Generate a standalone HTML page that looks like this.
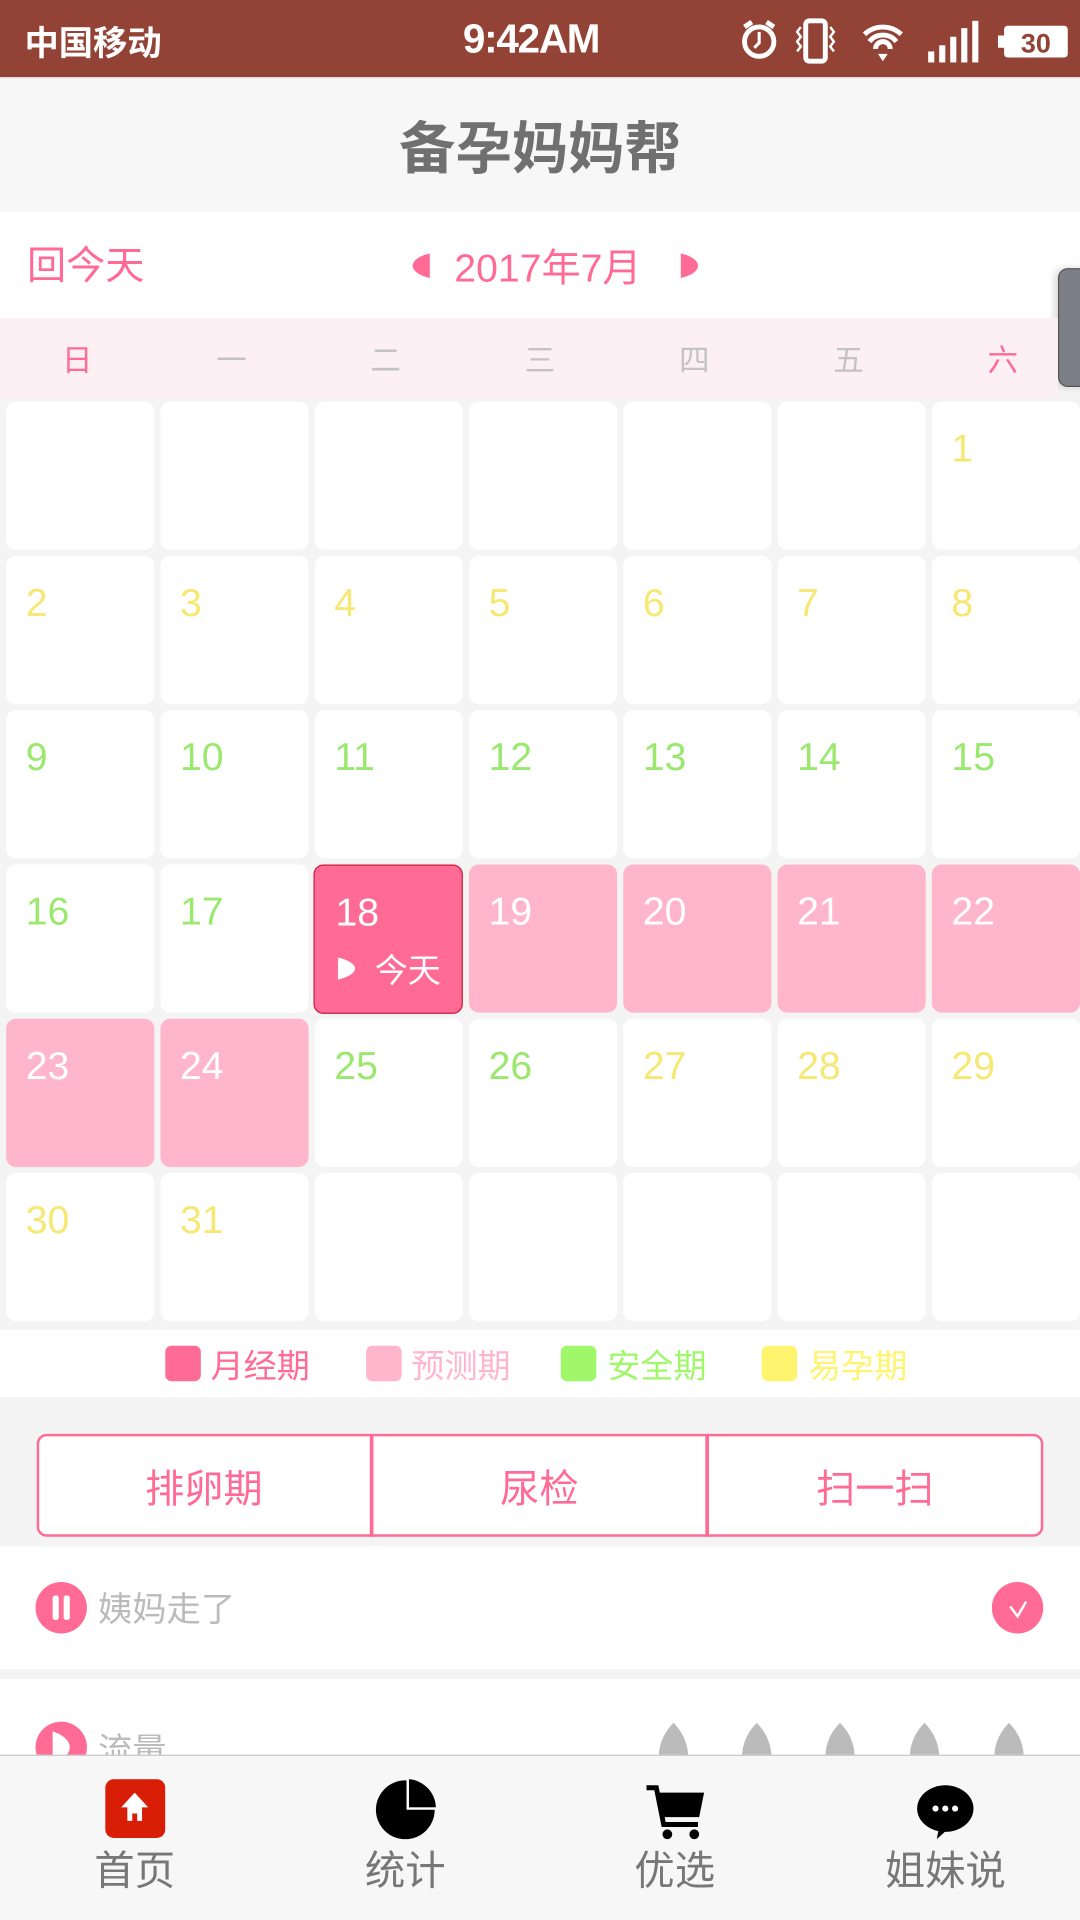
<!DOCTYPE html>
<html><head><meta charset="utf-8">
<style>
*{margin:0;padding:0;box-sizing:border-box}
html,body{width:1080px;height:1920px;overflow:hidden;background:#f5f5f5}
#w{position:absolute;left:0;top:0;width:882px;height:1568px;transform:scale(1.22449);transform-origin:0 0;font-family:"Liberation Sans","Noto Sans CJK SC",sans-serif;background:#f4f4f4}
.a{position:absolute}
.c{position:absolute;width:121px;height:121px;background:#fff;border-radius:8px}
.n{position:absolute;left:16px;top:20px;font-size:32px;line-height:36px}
.y{color:#f7e873}.g{color:#9be86f}.wt{color:#fff}
.wd{position:absolute;top:275px;font-size:25px;color:#c3c3c3;width:60px;text-align:center}
</style></head><body><div id="w">
<div class="a" style="left:0;top:0;width:882px;height:63px;background:#934335;color:#fff;font-weight:bold">
 <div class="a" style="left:20px;top:14px;font-size:28px">中国移动</div>
 <div class="a" style="left:378px;top:13px;font-size:33px;letter-spacing:-1px">9:42AM</div>
 <svg class="a" style="left:600px;top:14px" width="280" height="40" viewBox="0 0 280 40">
  <circle cx="20" cy="20" r="12" fill="none" stroke="#fff" stroke-width="4"/><path d="M20 12v9l-4 4" stroke="#fff" stroke-width="2.5" fill="none"/><path d="M8 8l6-4M32 8l-6-4" stroke="#fff" stroke-width="4"/>
  <rect x="58" y="3" width="16" height="33" rx="3" fill="none" stroke="#fff" stroke-width="4"/><path d="M54 8l-3 4 3 4-3 4 3 4-3 4M78 8l3 4-3 4 3 4-3 4 3 4" stroke="#fff" stroke-width="2" fill="none"/>
  <path d="M106 14a22 22 0 0 1 30 0M110 20a14 14 0 0 1 22 0M115 26a6 6 0 0 1 12 0" stroke="#fff" stroke-width="4" fill="none"/><path d="M117 30h8l-4 6z" fill="#fff"/>
  <rect x="158" y="28" width="5" height="9" fill="#fff"/><rect x="167" y="23" width="5" height="14" fill="#fff"/><rect x="176" y="16" width="5" height="21" fill="#fff"/><rect x="185" y="9" width="5" height="28" fill="#fff"/><rect x="194" y="3" width="5" height="34" fill="#fff"/>
  <rect x="220" y="7" width="52" height="26" rx="3" fill="#fff"/><rect x="215" y="15" width="6" height="10" fill="#fff"/>
  <text x="246" y="29" font-size="22" font-weight="bold" text-anchor="middle" fill="#934335" font-family="Liberation Sans">30</text>
 </svg>
</div>
<div class="a" style="left:0;top:63px;width:882px;height:110px;background:#f7f7f7;border-top:1px solid #ddd"></div>
<div class="a" style="left:0;top:85px;width:882px;text-align:center;font-size:46px;font-weight:bold;color:#707070">备孕妈妈帮</div>
<div class="a" style="left:0;top:173px;width:882px;height:87px;background:#fff"></div>
<div class="a" style="left:22px;top:192px;font-size:32px;color:#ff6b95">回今天</div>
<svg class="a" style="left:334px;top:205px" width="20" height="24"><path d="M17 2C8 4 3 8 3 12s5 8 14 10z" fill="#ff6b95"/></svg>
<div class="a" style="left:371px;top:194px;font-size:32px;color:#ff6b95">2017年7月</div>
<svg class="a" style="left:553px;top:205px" width="20" height="24"><path d="M3 2c9 2 14 6 14 10s-5 8-14 10z" fill="#ff6b95"/></svg>
<div class="a" style="left:864px;top:219px;width:30px;height:97px;background:#7c7e88;border:1px solid #555;border-radius:8px;box-shadow:-3px 0 6px rgba(0,0,0,.15)"></div>
<div class="a" style="left:0;top:260px;width:864px;height:65px;background:#fdf0f4"></div>
<div class="wd" style="left:33px;color:#ff6b95">日</div>
<div class="wd" style="left:159px">一</div>
<div class="wd" style="left:285px">二</div>
<div class="wd" style="left:411px">三</div>
<div class="wd" style="left:537px">四</div>
<div class="wd" style="left:663px">五</div>
<div class="wd" style="left:789px;color:#ff6b95">六</div>

<div class="c" style="left:5px;top:328px"></div><div class="c" style="left:131px;top:328px"></div><div class="c" style="left:257px;top:328px"></div><div class="c" style="left:383px;top:328px"></div><div class="c" style="left:509px;top:328px"></div><div class="c" style="left:635px;top:328px"></div>
<div class="c" style="left:761px;top:328px"><div class="n y">1</div></div>
<div class="c" style="left:5px;top:454px"><div class="n y">2</div></div>
<div class="c" style="left:131px;top:454px"><div class="n y">3</div></div>
<div class="c" style="left:257px;top:454px"><div class="n y">4</div></div>
<div class="c" style="left:383px;top:454px"><div class="n y">5</div></div>
<div class="c" style="left:509px;top:454px"><div class="n y">6</div></div>
<div class="c" style="left:635px;top:454px"><div class="n y">7</div></div>
<div class="c" style="left:761px;top:454px"><div class="n y">8</div></div>
<div class="c" style="left:5px;top:580px"><div class="n g">9</div></div>
<div class="c" style="left:131px;top:580px"><div class="n g">10</div></div>
<div class="c" style="left:257px;top:580px"><div class="n g">11</div></div>
<div class="c" style="left:383px;top:580px"><div class="n g">12</div></div>
<div class="c" style="left:509px;top:580px"><div class="n g">13</div></div>
<div class="c" style="left:635px;top:580px"><div class="n g">14</div></div>
<div class="c" style="left:761px;top:580px"><div class="n g">15</div></div>
<div class="c" style="left:5px;top:706px"><div class="n g">16</div></div>
<div class="c" style="left:131px;top:706px"><div class="n g">17</div></div>
<div class="c" style="left:256px;top:706px;width:122px;height:122px;background:#ff6b95;border:1px solid #d01a3a"><div class="n wt" style="left:17px">18</div>
 <svg class="a" style="left:16px;top:73px" width="20" height="22"><path d="M3 2c9 2 14 6 14 9s-5 7-14 9z" fill="#fff"/></svg>
 <div class="a" style="left:49px;top:64px;font-size:27px;color:#fff">今天</div></div>
<div class="c" style="left:383px;top:706px;background:#ffb6cc"><div class="n wt">19</div></div>
<div class="c" style="left:509px;top:706px;background:#ffb6cc"><div class="n wt">20</div></div>
<div class="c" style="left:635px;top:706px;background:#ffb6cc"><div class="n wt">21</div></div>
<div class="c" style="left:761px;top:706px;background:#ffb6cc"><div class="n wt">22</div></div>
<div class="c" style="left:5px;top:832px;background:#ffb6cc"><div class="n wt">23</div></div>
<div class="c" style="left:131px;top:832px;background:#ffb6cc"><div class="n wt">24</div></div>
<div class="c" style="left:257px;top:832px"><div class="n g">25</div></div>
<div class="c" style="left:383px;top:832px"><div class="n g">26</div></div>
<div class="c" style="left:509px;top:832px"><div class="n y">27</div></div>
<div class="c" style="left:635px;top:832px"><div class="n y">28</div></div>
<div class="c" style="left:761px;top:832px"><div class="n y">29</div></div>
<div class="c" style="left:5px;top:958px"><div class="n y">30</div></div>
<div class="c" style="left:131px;top:958px"><div class="n y">31</div></div>
<div class="c" style="left:257px;top:958px"></div><div class="c" style="left:383px;top:958px"></div><div class="c" style="left:509px;top:958px"></div><div class="c" style="left:635px;top:958px"></div><div class="c" style="left:761px;top:958px"></div>

<div class="a" style="left:0;top:1086px;width:882px;height:55px;background:#fff"></div>
<div class="a" style="left:135px;top:1099px;width:29px;height:29px;border-radius:5px;background:#ff6b95"></div>
<div class="a" style="left:172px;top:1094px;font-size:27px;color:#ff6b95">月经期</div>
<div class="a" style="left:299px;top:1099px;width:29px;height:29px;border-radius:5px;background:#ffb6cc"></div>
<div class="a" style="left:336px;top:1094px;font-size:27px;color:#ffb6cc">预测期</div>
<div class="a" style="left:458px;top:1099px;width:29px;height:29px;border-radius:5px;background:#a0f76a"></div>
<div class="a" style="left:496px;top:1094px;font-size:27px;color:#a0f76a">安全期</div>
<div class="a" style="left:622px;top:1099px;width:29px;height:29px;border-radius:5px;background:#fff46e"></div>
<div class="a" style="left:660px;top:1094px;font-size:27px;color:#fff46e">易孕期</div>

<div class="a" style="left:30px;top:1171px;width:822px;height:84px;border:2px solid #ff6b95;border-radius:8px;background:#fff"></div>
<div class="a" style="left:302px;top:1171px;width:3px;height:84px;background:#ff6b95"></div>
<div class="a" style="left:576px;top:1171px;width:3px;height:84px;background:#ff6b95"></div>
<div class="a" style="left:30px;top:1191px;width:273px;text-align:center;font-size:32px;color:#ff6b95">排卵期</div>
<div class="a" style="left:304px;top:1191px;width:273px;text-align:center;font-size:32px;color:#ff6b95">尿检</div>
<div class="a" style="left:578px;top:1191px;width:273px;text-align:center;font-size:32px;color:#ff6b95">扫一扫</div>

<div class="a" style="left:0;top:1263px;width:882px;height:100px;background:#fff"></div>
<div class="a" style="left:29px;top:1292px;width:42px;height:42px;border-radius:50%;background:#ff6b95"></div>
<div class="a" style="left:43px;top:1303px;width:5px;height:20px;background:#fff;border-radius:2px"></div>
<div class="a" style="left:52px;top:1303px;width:5px;height:20px;background:#fff;border-radius:2px"></div>
<div class="a" style="left:80px;top:1293px;font-size:28px;color:#bbb">姨妈走了</div>
<div class="a" style="left:810px;top:1292px;width:42px;height:42px;border-radius:50%;background:#ff6b95"></div>
<svg class="a" style="left:810px;top:1292px" width="42" height="42"><path d="M15 20l6 8 7-12" stroke="#fff" stroke-width="2" fill="none"/></svg>
<div class="a" style="left:0;top:1371px;width:882px;height:62px;background:#fff"></div>
<div class="a" style="left:29px;top:1406px;width:42px;height:42px;border-radius:50%;background:#ff6b95"></div>
<svg class="a" style="left:29px;top:1406px" width="42" height="28"><path d="M14 8c9 3 14 8 14 13s-5 10-14 13z" fill="#fff"/></svg>
<div class="a" style="left:80px;top:1408px;font-size:28px;color:#bbb">流量</div>
<svg class="a" style="left:530px;top:1405px" width="320" height="30"><g fill="#bbb"><path d="M20 2c8 8 12 18 12 28H8C8 20 12 10 20 2z"/><path d="M88 2c8 8 12 18 12 28H76C76 20 80 10 88 2z"/><path d="M156 2c8 8 12 18 12 28H144c0-10 4-20 12-28z"/><path d="M225 2c8 8 12 18 12 28H213c0-10 4-20 12-28z"/><path d="M294 2c8 8 12 18 12 28H282c0-10 4-20 12-28z"/></g></svg>

<div class="a" style="left:0;top:1433px;width:882px;height:135px;background:#f7f7f7;border-top:1px solid #c8c8c8"></div>
<svg class="a" style="left:85px;top:1453px" width="50" height="50"><rect x="1" y="0" width="49" height="48" rx="7" fill="#d81e06"/><path d="M25 11l-11 12h5v11h4v-6h4v6h4V23h5z" fill="#fff"/></svg>
<svg class="a" style="left:306px;top:1453px" width="50" height="50"><circle cx="25" cy="25" r="24" fill="#000"/><path d="M28 0v23h23V0z" fill="#f7f7f7"/><path d="M28 0a24 24 0 0 1 22 23H28z" fill="#000"/><path d="M27 0v24h23" stroke="#fff" stroke-width="2" fill="none"/></svg>
<svg class="a" style="left:526px;top:1456px" width="52" height="50"><path d="M2 4h8l6 30h28" stroke="#000" stroke-width="4" fill="none"/><path d="M11 8h38l-4 20H15z" fill="#000"/><circle cx="19" cy="42" r="4"/><circle cx="41" cy="42" r="4"/></svg>
<svg class="a" style="left:747px;top:1456px" width="50" height="50"><ellipse cx="25" cy="21" rx="23" ry="19" fill="#000"/><path d="M20 36l-2 10 10-9z" fill="#000"/><circle cx="17" cy="21" r="2.5" fill="#fff"/><circle cx="25" cy="21" r="2.5" fill="#fff"/><circle cx="33" cy="21" r="2.5" fill="#fff"/></svg>
<div class="a" style="left:60px;top:1501px;width:100px;text-align:center;font-size:33px;color:#777">首页</div>
<div class="a" style="left:281px;top:1501px;width:100px;text-align:center;font-size:33px;color:#777">统计</div>
<div class="a" style="left:501px;top:1501px;width:100px;text-align:center;font-size:33px;color:#777">优选</div>
<div class="a" style="left:707px;top:1501px;width:130px;text-align:center;font-size:33px;color:#777">姐妹说</div>
</div></body></html>
